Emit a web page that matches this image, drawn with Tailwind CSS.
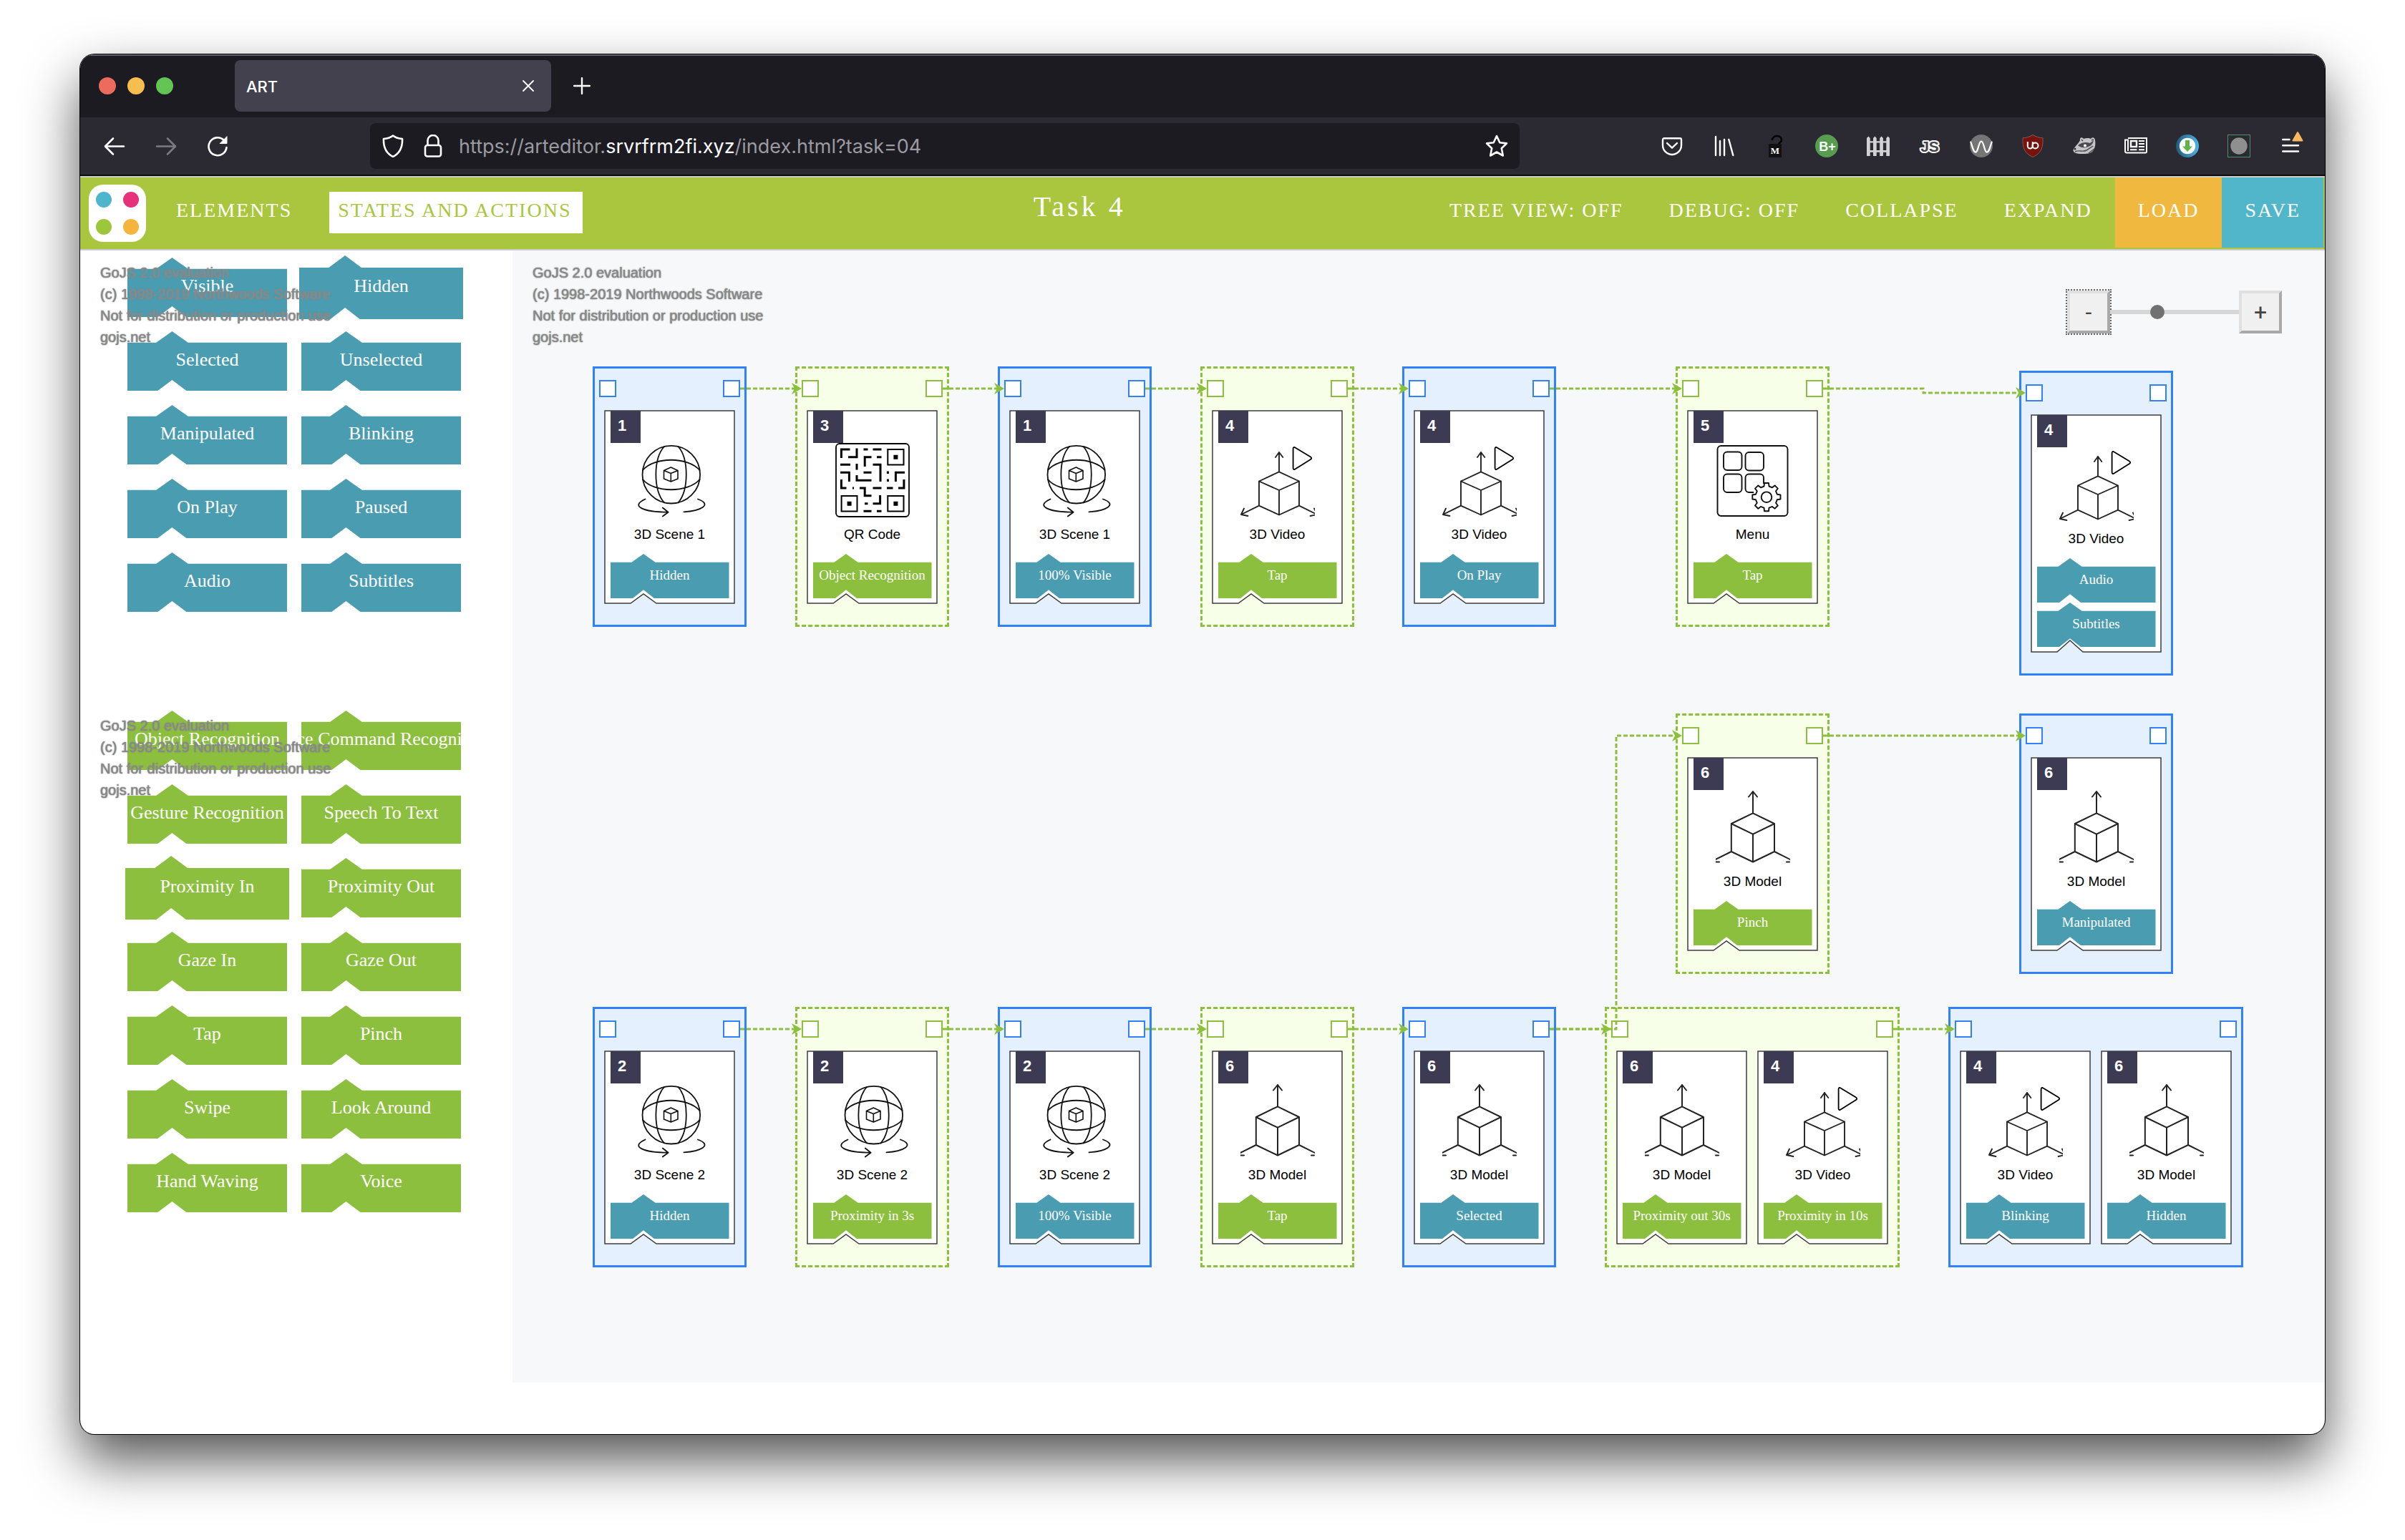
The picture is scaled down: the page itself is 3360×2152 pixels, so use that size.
<!DOCTYPE html>
<html lang="en">
<head>
<meta charset="utf-8">
<title>ART</title>
<script src="https://cdn.jsdelivr.net/npm/@tailwindcss/browser@4"></script>
</head>
<body class="bg-white">
<div class="px-28 pt-[76px] pb-[148px]">
<div class="overflow-hidden rounded-[20px] bg-white shadow-[0_0_0_1px_#000,0_36px_76px_rgba(0,0,0,0.68)]">

  <!-- Tab strip -->
  <div class="flex h-[88px] items-center border-t-2 border-[#5f5e64] bg-[#1c1b22] pb-0.5 font-['Inter',sans-serif]">
    <div class="flex gap-4 pl-[26px]">
      <button aria-label="Close" class="size-6 rounded-full bg-[#ed6a5e]"></button>
      <button aria-label="Minimize" class="size-6 rounded-full bg-[#f5be4f]"></button>
      <button aria-label="Zoom" class="size-6 rounded-full bg-[#62c554]"></button>
    </div>
    <div class="ml-[86px] flex h-[72px] w-[442px] items-center justify-between rounded-lg bg-[#42414d] pr-6 pl-4 text-white">
      <span class="pt-0.5 text-[22px] font-medium">ART</span>
      <button aria-label="Close tab"><svg class="size-4" viewBox="0 0 16 16" fill="none" stroke="#fff" stroke-width="1.800" stroke-linecap="round"><path d="M1 1L15 15M15 1L1 15"/></svg></button>
    </div>
    <button aria-label="New tab" class="ml-[31px]"><svg class="size-6" viewBox="0 0 24 24" fill="none" stroke="#fff" stroke-width="2.4" stroke-linecap="round"><path d="M12 1V23M1 12H23"/></svg></button>
  </div>

  <!-- Navigation bar -->
  <div class="flex h-[84px] items-center border-b-2 border-[#ccc] bg-[#2b2a33] px-3 pb-0.5 font-['Inter',sans-serif] shadow-[inset_0_-2px_0_#0c0c0d]">
    <button aria-label="Back" class="flex w-[72px] justify-center"><svg class="size-8" viewBox="0 0 32 32" fill="none" stroke="#fff" stroke-width="2.6" stroke-linecap="round" stroke-linejoin="round"><path d="M29 16.500H3.500M14 5.500L3 16.500L14 27.500"/></svg></button>
    <button aria-label="Forward" class="flex w-[72px] justify-center"><svg class="size-8" viewBox="0 0 32 32" fill="none" stroke="#7b7a81" stroke-width="2.6" stroke-linecap="round" stroke-linejoin="round"><path d="M3 16.500H28.500M18 5.500L29 16.500L18 27.500"/></svg></button>
    <button aria-label="Reload" class="flex w-[72px] justify-center"><svg class="size-8" viewBox="0 0 32 32" fill="none" stroke="#fff" stroke-width="2.6" stroke-linecap="round" stroke-linejoin="round"><path d="M28.500 18A12.500 12.500 0 1 1 24.500 7.500"/><path d="M29 3V12.500H19.500Z" fill="#fff" stroke-width="1"/></svg></button>
    <div class="mx-[177px] flex h-16 flex-1 items-center rounded-lg bg-[#1c1b22] pr-4 pl-4">
      <svg class="size-8" viewBox="0 0 32 32" fill="none" stroke="#fff" stroke-width="2.6" stroke-linejoin="round"><path d="M16 1.500C19 4 24 5.500 29 6C29.500 17 26 26 16 31C6 26 2.500 17 3 6C8 5.500 13 4 16 1.500Z"/></svg>
      <svg class="ml-6 size-8" viewBox="0 0 32 32" fill="none" stroke="#fff" stroke-width="2.6" stroke-linejoin="round"><rect x="5" y="15" width="22" height="15.500" rx="3"/><path d="M8.500 15V8.500A7.500 7.500 0 0 1 23.500 8.500V15"/></svg>
      <span class="ml-5 pt-0.5 text-[27px] whitespace-nowrap text-[#9b9aa1]">https://arteditor.<span class="text-[#fbfbfe]">srvrfrm2fi.xyz</span>/index.html?task=04</span>
      <button aria-label="Bookmark this page" class="ml-auto"><svg class="size-8" viewBox="0 0 32 32" fill="none" stroke="#fff" stroke-width="2.6" stroke-linejoin="round"><path d="M16 2L20.300 11.300L30 12.400L22.800 19.300L24.800 29.500L16 24.500L7.200 29.500L9.200 19.300L2 12.400L11.700 11.300Z"/></svg></button>
    </div>
    <div class="flex [&>button]:flex [&>button]:w-[72px] [&>button]:justify-center [&_svg]:size-8 [&_svg]:overflow-visible">
      <button aria-label="Pocket"><svg viewBox="0 0 32 32" fill="none" stroke="#fff" stroke-width="2.4" stroke-linecap="round" stroke-linejoin="round"><path d="M5 5.200H27A2 2 0 0 1 29 7.200V15A13 13 0 0 1 3 15V7.200A2 2 0 0 1 5 5.200Z"/><path d="M9 12L16 18.700L23 12"/></svg></button>
      <button aria-label="Library"><svg viewBox="0 0 32 32" fill="none" stroke="#fff" stroke-width="2.4" stroke-linecap="round"><path d="M5 3V29M11 9V29M17 7V29M23.300 7L29.300 29"/></svg></button>
      <button aria-label="MailVelope"><svg viewBox="0 0 32 32"><path d="M11.500 8C13 0 25 0 25 8C25 10 22 11 21 14" fill="none" stroke="#000" stroke-width="2.6"/><rect x="7" y="13" width="18" height="19" fill="#111"/><text x="16" y="27" text-anchor="middle" fill="#fff" font-family="Liberation Serif" font-weight="700" font-size="13">M</text></svg></button>
      <button aria-label="Grade"><svg viewBox="0 0 32 32"><circle cx="16" cy="16" r="16" fill="#589c50"/><text x="17" y="23" text-anchor="middle" fill="#fff" font-family="Liberation Sans" font-weight="700" font-size="18">B+</text></svg></button>
      <button aria-label="Fence"><svg viewBox="0 0 32 32" fill="#d2d2d5"><path d="M0 30V5L2.400 2.500L4.700 5V30ZM9 30V5L11.400 2.500L13.700 5V30ZM18.200 30V5L20.500 2.500L22.900 5V30ZM27.300 30V5L29.700 2.500L32 5V30Z"/><path d="M0 9.300H32V11.600H0ZM0 22H32V24.700H0Z"/></svg></button>
      <button aria-label="JavaScript"><svg viewBox="0 0 32 32"><text x="16" y="23.500" text-anchor="middle" fill="#44434b" stroke="#fff" stroke-width="4" stroke-linejoin="round" paint-order="stroke" font-family="Liberation Sans" font-weight="700" font-size="21">JS</text></svg></button>
      <button aria-label="Wave"><svg viewBox="0 0 32 32"><circle cx="16" cy="16" r="16" fill="#757575"/><path d="M1.300 10.500C4 18 5 24.700 8 24.700C12 24.700 12 9.500 16 9.500C20 9.500 20 24.700 23.800 24.700C27 24.700 28 18 30.700 10.500" fill="none" stroke="#fff" stroke-width="2.200" stroke-linecap="round"/></svg></button>
      <button aria-label="uBlock Origin"><svg viewBox="0 0 32 32"><path d="M16 0.500C20 3 25 4.500 30 4.800C30.500 18 28 26 16 31.500C4 26 1.500 18 2 4.800C7 4.500 12 3 16 .5Z" fill="#75130c" stroke="#8f5450"/><path d="M8.800 10V16A3.500 3.500 0 0 0 15.800 16V10" fill="none" stroke="#fff" stroke-width="2"/><circle cx="19.500" cy="15.500" r="4" fill="none" stroke="#fff" stroke-width="2"/></svg></button>
      <button aria-label="Privacy Badger"><svg viewBox="0 0 32 32"><path d="M10 8C9 4 13 3 15 6C19 4.500 23 5 25 6C27 3 31 4 31 8C32 13 31 19 28 23C25 27 19 27 12 27C5 27 0 25 0.500 22C1 18 7 14 10 8Z" fill="#c4c4c6"/><path d="M7 15C12 11 18 10 24 12L29 8C28 14 24 17 18 18C13 19 9 17 7 15Z" fill="#4c4b52"/><circle cx="17" cy="15.500" r="2" fill="#fff"/><path d="M3 24C8 21 14 25 19 22L28 16M12 7L14 9M26 8L29 7M22 26L30 20" fill="none" stroke="#4c4b52" stroke-width="1.500"/><circle cx="3" cy="20" r="1.500" fill="#333"/></svg></button>
      <button aria-label="Reader"><svg viewBox="0 0 32 32" fill="none" stroke="#fff" stroke-width="2"><path d="M5 5H31V24A1.500 1.500 0 0 1 29.500 25.500H3.500A2.500 2.500 0 0 1 1 23V7.500H5V23"/><rect x="9" y="9" width="8" height="8" stroke-width="2.400"/><path d="M20 9H28M20 13H28M20 17H28M8 21.300H17.500M20 21.300H28"/></svg></button>
      <button aria-label="Downloads"><svg viewBox="0 0 32 32"><defs><linearGradient id="dl"><stop offset="0" stop-color="#215a7b"/><stop offset="1" stop-color="#4db4e6"/></linearGradient></defs><circle cx="16" cy="16" r="16" fill="url(#dl)"/><circle cx="16" cy="16" r="11.200" fill="#fff"/><path d="M13 8H19V16.500H23L16 24L9 16.500H13Z" fill="#62b346"/></svg></button>
      <button aria-label="Recorder"><svg viewBox="0 0 32 32"><rect x=".5" y=".5" width="31" height="31" fill="none" stroke="#4b9066"/><circle cx="16" cy="16" r="11.700" fill="#8f8f8f"/></svg></button>
      <button aria-label="Menu"><svg viewBox="0 0 32 32"><path d="M5.300 7H14.500M5.300 15.300H27M5.300 23.400H27" stroke="#fff" stroke-width="2.500" stroke-linecap="round"/><path d="M26 -3L19.500 8.500H32.500Z" fill="#f6b95f" stroke="#f6b95f" stroke-width="2" stroke-linejoin="round"/></svg></button>
    </div>
  </div>

  <!-- Application header -->
  <header class="flex h-[102px] items-start border-b-2 border-[#ccc] bg-[#a9c63e] pr-0.5 pl-3 font-['Liberation_Serif',serif] text-[28px] tracking-[2px] text-white">
    <div class="mt-2.5 grid size-20 grid-cols-2 place-items-center rounded-[20px] bg-white p-0.5">
      <span class="size-[22px] rounded-full bg-[#4fb5cb]"></span>
      <span class="size-[22px] rounded-full bg-[#e6327b]"></span>
      <span class="size-[22px] rounded-full bg-[#9dc63b]"></span>
      <span class="size-[22px] rounded-full bg-[#f5b53d]"></span>
    </div>
    <button class="mt-5 ml-[30px] h-[58px] px-3 pb-1.5 whitespace-nowrap">ELEMENTS</button>
    <button class="mt-5 ml-10 h-[58px] bg-white pr-4 pb-1.5 pl-3 whitespace-nowrap text-[#a9c63e]">STATES AND ACTIONS</button>
    <h1 class="mt-[18px] flex-1 pl-[209px] text-center text-[40px] leading-[46px] tracking-[4px]">Task 4</h1>
    <nav class="flex [&>button]:h-[98px] [&>button]:px-8 [&>button]:pb-1.5 [&>button]:whitespace-nowrap">
      <button>TREE VIEW: OFF</button>
      <button>DEBUG: OFF</button>
      <button>COLLAPSE</button>
      <button>EXPAND</button>
      <button class="bg-[#f1b83f]">LOAD</button>
      <button class="bg-[#51b6c9]">SAVE</button>
    </nav>
  </header>

  <main class="flex pb-[72px]">
    <aside class="w-[604px] shrink-0">
      <section class="relative h-[633px] pt-2.5">
        <div id="states" class="grid grid-cols-[223px_223px] gap-5 pl-[66px]"></div>
        <p class="absolute top-4 left-7 font-['Liberation_Sans',sans-serif] text-xl leading-[30px] whitespace-nowrap text-[#888] [text-shadow:0_0_1px_#888,0_0_2px_#888]">GoJS 2.0 evaluation<br>(c) 1998-2019 Northwoods Software<br>Not for distribution or production use<br>gojs.net</p>
      </section>
      <section class="relative pt-2.5">
        <div id="actions" class="grid grid-cols-[223px_223px] gap-5 pl-[66px]"></div>
        <p class="absolute top-4 left-7 font-['Liberation_Sans',sans-serif] text-xl leading-[30px] whitespace-nowrap text-[#888] [text-shadow:0_0_1px_#888,0_0_2px_#888]">GoJS 2.0 evaluation<br>(c) 1998-2019 Northwoods Software<br>Not for distribution or production use<br>gojs.net</p>
      </section>
    </aside>

    <section id="canvas" class="relative h-[1582px] flex-1 overflow-hidden bg-[#f7f8fa]">
      <p class="absolute top-4 left-7 font-['Liberation_Sans',sans-serif] text-xl leading-[30px] whitespace-nowrap text-[#888] [text-shadow:0_0_1px_#888,0_0_2px_#888]">GoJS 2.0 evaluation<br>(c) 1998-2019 Northwoods Software<br>Not for distribution or production use<br>gojs.net</p>
      <div class="absolute top-14 right-[60px] flex items-center font-['Roboto',sans-serif] text-[32px] leading-9 text-[#444]">
        <button class="size-[60px] border-4 border-t-[#e0e0e0] border-r-[#a9a9a9] border-b-[#a9a9a9] border-l-[#e0e0e0] bg-[#f0f0f0] outline-2 outline-[#666] outline-dotted">-</button>
        <input type="range" aria-label="Zoom" min="0" max="100" value="35" class="h-1.5 w-[180px] appearance-none bg-[#d6d6d6] [&::-webkit-slider-thumb]:size-5 [&::-webkit-slider-thumb]:appearance-none [&::-webkit-slider-thumb]:rounded-full [&::-webkit-slider-thumb]:bg-[#717171]">
        <button class="size-[60px] border-4 border-t-[#e0e0e0] border-r-[#a9a9a9] border-b-[#a9a9a9] border-l-[#e0e0e0] bg-[#f0f0f0]">+</button>
      </div>
      <div id="nodes"></div>
      <svg class="pointer-events-none absolute inset-0 size-full"><g id="links" fill="none" stroke="#8bbf3d" stroke-width="3" stroke-dasharray="6 3"></g><g id="arrows" fill="#8bbf3d"></g></svg>
    </section>
  </main>
</div>
</div>

<script>
const ICONS = {
  scene: '<g fill="none" stroke="#111" stroke-width="1.800" stroke-linecap="round" stroke-linejoin="round"><circle cx="53.800" cy="44.200" r="40.300"/><path d="M44 5C28.500 22 28.500 66 44 83.500M63.500 5C78.500 22 78.500 66 63.500 83.500M14 38C30 19 77 19 93.500 38M14 51C30 70 77 70 93.500 51"/><path d="M53.300 34L63 38.500V50L53.300 54L43.500 50V38.500ZM43.500 38.500L53.300 42.500L63 38.500M53.300 42.500V54" stroke-width="1.600"/><path d="M17.500 78.500C-4 88 14 96.500 49.600 96.700M41.800 90.500L49.600 96.700L41.800 102.500M91 78.500C112 86 95 95 71.400 96.300"/></g>',
  video: '<g fill="none" stroke="#222" stroke-width="1.900" stroke-linecap="round" stroke-linejoin="round"><path d="M54 40V13M49 20L54 13L59.300 20M54 40.300L82 53.500L54 66L26 53.500ZM26 53.500V87.700L54 100.500L82 87.700V53.500M54 66V100.500M26 87.700L1 100M5 91.500L1 100L10.400 102M82 87.700L107 100M103 91.500L107 100L97.600 102"/><path d="M73.600 8C73.600 6 75 5.500 76.500 6.500L98 19.500C99.600 20.500 99.600 22 98 23L76.500 36.500C75 37.500 73.600 37 73.600 35Z" stroke="#000" stroke-width="1.800"/></g>',
  model: '<g fill="none" stroke="#222" stroke-width="2" stroke-linecap="round" stroke-linejoin="round"><path d="M52 32V2M46 9.500L52 2L58 9.500M52 32.300L82 47L52 61.700L21.800 47ZM21.800 47V86L52 100.500L82 86V47M52 61.700V100.500M21.800 86L-6 100M82 86L110 100M0 100.500H5M99 100.500H103"/></g>',
  menu: '<g fill="none" stroke="#111" stroke-width="1.900" stroke-linejoin="round"><rect x="2.500" y="4" width="98" height="98" rx="5"/><rect x="11" y="12.500" width="25.500" height="25.500" rx="5"/><rect x="41.500" y="13" width="25.500" height="25.500" rx="5"/><rect x="11" y="43.500" width="25.500" height="25.500" rx="5"/><path d="M53 69H46.500A5 5 0 0 1 41.500 64V48.500A5 5 0 0 1 46.500 43.500H62A5 5 0 0 1 67 48.500V57"/><path d="M67.500 60.500L68 56H74L74.500 60.500L79 62.300L82.600 59.400L86.800 63.600L84 67.300L85.800 71.700L90.500 72.500V78.500L85.800 79.300L84 83.800L86.800 87.500L82.600 91.700L79 88.900L74.500 90.700L74 95.300H68L67.500 90.700L63 88.900L59.300 91.700L55 87.500L57.800 83.800L56 79.300L51.300 78.500V72.500L56 71.700L57.800 67.300L55 63.600L59.300 59.400L63 62.300Z"/><circle cx="71" cy="75.700" r="7.300"/></g>',
  qr: '<g fill="none" stroke="#000" stroke-width="3"><rect x="1" y="1" width="102" height="102" rx="5" stroke-width="1.800"/><path stroke-width="2" d="M73.300 9H95.500V30.500H73.300ZM8.600 74H30.500V95.500H8.600ZM73.300 74H95.500V95.500H73.300Z"/><path stroke-width="6" d="M81.400 19.700H87.400M16.600 84.700H22.600M81.400 84.700H87.400"/><path d="M8.400 21V9H20.500M30 7.500V19.700H18M39.500 9H45.500M52.500 9H64.500M58 19.700H64.500M41.200 33V19.700H50.500M7 30.300H21M30 29V37.500M52.500 30.300H63V54M7 41.300H19.400V54M39.500 41.300H50.500M30 45V52.300H50.500M73.400 39.500V43M73.400 50.500V54M84.400 54V41.300H97M8.400 51V63H15.500M24 63H26M34 63H41.200V73.700H50.500M52.500 63H64.500M72 63H80.500M88 63H95.900V51M62.600 73V84.700H52.500M41 84.700H45.500M39.500 95.300H50.500M58 95.300H64.500"/></g>'
};

const paletteItem = (text, fill, lifted) =>
  `<button class="relative h-[83px] w-[223px] font-['Liberation_Serif',serif] text-[26px] leading-[30px] text-white">
    <span class="absolute ${lifted ? '-inset-[3px]' : 'inset-0'} ${fill} [clip-path:polygon(0_19%,18%_19%,28%_0,38%_19%,100%_19%,100%_100%,37%_100%,28%_82%,19%_100%,0_100%)]"></span>
    <span class="relative flex justify-center overflow-hidden pb-1 whitespace-nowrap">${text}</span>
  </button>`;

const states = ['Visible', 'Hidden', 'Selected', 'Unselected', 'Manipulated', 'Blinking', 'On Play', 'Paused', 'Audio', 'Subtitles'];
const actions = ['Object Recognition', 'Voice Command Recognition', 'Gesture Recognition', 'Speech To Text', 'Proximity In', 'Proximity Out', 'Gaze In', 'Gaze Out', 'Tap', 'Pinch', 'Swipe', 'Look Around', 'Hand Waving', 'Voice'];
document.getElementById('states').innerHTML = states.map(t => paletteItem(t, 'bg-[#4a9cb0]', t === 'Hidden')).join('');
document.getElementById('actions').innerHTML = actions.map(t => paletteItem(t, 'bg-[#8bbf3d]', t === 'Proximity In')).join('');

// Groups on the canvas: [kind, x, y, cards], a card being [number, icon, label, ...tags]
const groups = [
  ['state', 112, 162, [[1, 'scene', '3D Scene 1', 'Hidden']]],
  ['action', 395, 162, [[3, 'qr', 'QR Code', 'Object Recognition']]],
  ['state', 678, 162, [[1, 'scene', '3D Scene 1', '100% Visible']]],
  ['action', 961, 162, [[4, 'video', '3D Video', 'Tap']]],
  ['state', 1243, 162, [[4, 'video', '3D Video', 'On Play']]],
  ['action', 1625, 162, [[5, 'menu', 'Menu', 'Tap']]],
  ['state', 2105, 168, [[4, 'video', '3D Video', 'Audio', 'Subtitles']]],
  ['action', 1625, 647, [[6, 'model', '3D Model', 'Pinch']]],
  ['state', 2105, 647, [[6, 'model', '3D Model', 'Manipulated']]],
  ['state', 112, 1057, [[2, 'scene', '3D Scene 2', 'Hidden']]],
  ['action', 395, 1057, [[2, 'scene', '3D Scene 2', 'Proximity in 3s']]],
  ['state', 678, 1057, [[2, 'scene', '3D Scene 2', '100% Visible']]],
  ['action', 961, 1057, [[6, 'model', '3D Model', 'Tap']]],
  ['state', 1243, 1057, [[6, 'model', '3D Model', 'Selected']]],
  ['action', 1526, 1057, [[6, 'model', '3D Model', 'Proximity out 30s'], [4, 'video', '3D Video', 'Proximity in 10s']]],
  ['state', 2006, 1057, [[4, 'video', '3D Video', 'Blinking'], [6, 'model', '3D Model', 'Hidden']]]
];

const card = ([num, icon, label, ...tags], fill) => {
  const h = 209 + 62 * tags.length;
  const tip = tags.length > 1 ? 16 : 13;
  return `<div class="relative flex w-[183px] flex-col items-center pt-px pb-2">
    <svg class="absolute inset-0 size-full" viewBox="0 0 183 ${h}"><path d="M1 1H182V${h - 1}H73L55 ${h - 1 - tip}L37 ${h - 1}H1Z" fill="#fff" stroke="#3c3c3c" stroke-width="1.500"/></svg>
    <div class="relative ml-[9px] h-[45px] w-[42px] self-start bg-[#3d3a54] pt-2 pl-2.5 font-['Liberation_Sans',sans-serif] text-[22px] leading-[26px] font-bold text-white">${num}</div>
    <svg class="relative size-[104px]" viewBox="0 0 104 104">${ICONS[icon]}</svg>
    <div class="relative mt-3 mb-[15px] font-['Liberation_Sans',sans-serif] text-[19px] leading-6 whitespace-nowrap text-black">${label}</div>
    ${tags.map(t => `<div class="relative flex h-[62px] w-[166px] justify-center pt-[19px] font-['Liberation_Serif',serif] text-[19px] leading-[22px] whitespace-nowrap text-white ${fill} [clip-path:polygon(0_19%,18%_19%,28%_0,38%_19%,100%_19%,100%_100%,37%_100%,28%_81%,19%_100%,0_100%)]">${t}</div>`).join('')}
  </div>`;
};

document.getElementById('nodes').innerHTML = groups.map(([kind, x, y, cards]) => {
  const state = kind === 'state';
  const box = state ? 'border-[#3182fa] bg-[#e4f0fe]' : 'border-dashed border-[#8bbf3d] bg-[#f7ffe8]';
  const port = `<span class="size-6 border-2 bg-white ${state ? 'border-[#3182fa]' : 'border-[#8bbf3d]'}"></span>`;
  return `<div class="absolute border-[3px] px-1.5 pt-4 pb-[29px] ${box}" style="left:${x}px;top:${y}px">
    <div class="mb-[18px] flex justify-between">${port}${port}</div>
    <div class="flex gap-3.5 px-[7px]">${cards.map(c => card(c, state ? 'bg-[#4a9cb0]' : 'bg-[#8bbf3d]')).join('')}</div>
  </div>`;
}).join('');

// Connectors, each a list of points that ends at the arrow tip
const links = [
  [[318, 193], [404, 193]], [[601, 193], [687, 193]], [[884, 193], [970, 193]], [[1167, 193], [1252, 193]], [[1449, 193], [1634, 193]],
  [[1831, 193], [1971, 193], [1971, 199], [2114, 199]],
  [[1831, 678], [2114, 678]],
  [[318, 1088], [404, 1088]], [[601, 1088], [687, 1088]], [[884, 1088], [970, 1088]], [[1167, 1088], [1252, 1088]], [[1449, 1088], [1535, 1088]],
  [[1449, 1088], [1542, 1088], [1542, 678], [1634, 678]],
  [[1929, 1088], [2015, 1088]]
];
document.getElementById('links').innerHTML = links.map(p => `<polyline points="${p.map((q, i) => i === p.length - 1 ? [q[0] - 6, q[1]] : q).join(' ')}"/>`).join('');
document.getElementById('arrows').innerHTML = links.map(p => { const [x, y] = p[p.length - 1]; return `<path d="M${x} ${y}l-14 -8l4 8l-4 8z"/>`; }).join('');
</script>
</body>
</html>
